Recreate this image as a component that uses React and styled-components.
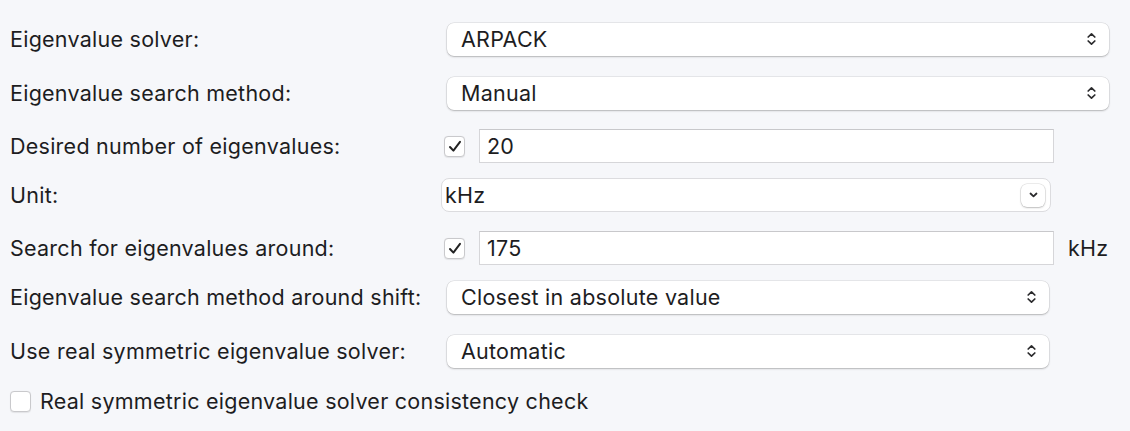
import React from 'react';
import styled, { createGlobalStyle } from 'styled-components';

const GlobalStyle = createGlobalStyle`
  html, body {
    margin: 0;
    padding: 0;
    background: #f6f7fa;
  }
  body {
    font-family: Inter, "Liberation Sans", Arial, sans-serif;
    color: #1d1d1f;
  }
`;

const Panel = styled.div`
  width: 1130px;
  height: 431px;
  box-sizing: border-box;
  padding: 22px 0 0 10px;
  display: flex;
  flex-direction: column;
  background: #f6f7fa;
`;

const Row = styled.div`
  display: grid;
  grid-template-columns: 431px 1fr;
  align-items: center;
  height: 34px;
  margin-top: ${p => p.$gap || 0}px;
`;

const Label = styled.span`
  font-size: 21.5px;
  letter-spacing: 0.25px;
  white-space: nowrap;
`;

const Control = styled.div`
  display: flex;
  align-items: center;
  padding-left: ${p => p.$left || 0}px;
`;

const Value = styled.span`
  font-size: 21.5px;
  letter-spacing: 0.25px;
`;

const PopUp = styled.div`
  width: ${p => p.$width}px;
  height: 33px;
  box-sizing: border-box;
  display: flex;
  align-items: center;
  justify-content: space-between;
  padding: 0 13px 0 14px;
  background: #ffffff;
  border-radius: 7px;
  box-shadow: 0 0 0 0.5px rgba(0, 0, 0, 0.12), 0 1px 2px rgba(0, 0, 0, 0.22);
`;

const Combo = styled.div`
  width: ${p => p.$width}px;
  height: 34px;
  box-sizing: border-box;
  display: flex;
  align-items: center;
  justify-content: space-between;
  padding: 0 5px 0 3px;
  background: #ffffff;
  border: 1px solid #dcdcdf;
  border-radius: 8px;
`;

const ComboButton = styled.div`
  width: 24px;
  height: 23px;
  display: flex;
  align-items: center;
  justify-content: center;
  background: #ffffff;
  border-radius: 6px;
  box-shadow: 0 0 0 0.5px rgba(0, 0, 0, 0.14), 0 1px 2px rgba(0, 0, 0, 0.2);
`;

const Check = styled.div`
  width: 21px;
  height: 21px;
  box-sizing: border-box;
  flex: none;
  display: flex;
  align-items: center;
  justify-content: center;
  background: #ffffff;
  border: 1px solid #c9c9cc;
  border-radius: 4px;
  box-shadow: 0 0.5px 1px rgba(0, 0, 0, 0.08);
`;

const Field = styled.div`
  width: ${p => p.$width}px;
  height: 34px;
  margin-left: 14px;
  box-sizing: border-box;
  display: flex;
  align-items: center;
  padding-left: 7px;
  background: #ffffff;
  border: 1px solid #d6d6d9;
  border-top-color: #c8c8cb;
`;

const Unit = styled(Value)`
  margin-left: 14px;
`;

const CheckRow = styled.label`
  display: flex;
  align-items: center;
  gap: 9px;
  margin-top: ${p => p.$gap}px;
  height: 34px;
`;

const UpDown = () => (
  <svg width="9" height="14" viewBox="0 0 9 14">
    <path d="M1.2 5 L4.5 1.8 L7.8 5 M1.2 9 L4.5 12.2 L7.8 9" fill="none" stroke="#2b2b2d" strokeWidth="1.7" strokeLinecap="round" strokeLinejoin="round" />
  </svg>
);

const Down = () => (
  <svg width="9" height="6" viewBox="0 0 9 6">
    <path d="M1.5 1.5 L4.5 4.3 L7.5 1.5" fill="none" stroke="#2b2b2d" strokeWidth="1.8" strokeLinecap="round" strokeLinejoin="round" />
  </svg>
);

const Tick = () => (
  <svg width="14" height="13" viewBox="0 0 14 13">
    <path d="M2 7 L5.4 10.6 L12 1.8" fill="none" stroke="#222" strokeWidth="2" strokeLinecap="round" strokeLinejoin="round" />
  </svg>
);

const Select = ({ value, width, left }) => (
  <Control $left={left}>
    <PopUp $width={width}>
      <Value>{value}</Value>
      <UpDown />
    </PopUp>
  </Control>
);

const NumberInput = ({ value, unit }) => (
  <Control $left={3}>
    <Check><Tick /></Check>
    <Field $width={575}><Value>{value}</Value></Field>
    {unit && <Unit>{unit}</Unit>}
  </Control>
);

export default function App() {
  return (
    <>
      <GlobalStyle />
      <Panel>
        <Row>
          <Label>Eigenvalue solver:</Label>
          <Select value="ARPACK" width={662} left={6} />
        </Row>
        <Row $gap={20}>
          <Label>Eigenvalue search method:</Label>
          <Select value="Manual" width={662} left={6} />
        </Row>
        <Row $gap={19}>
          <Label>Desired number of eigenvalues:</Label>
          <NumberInput value="20" />
        </Row>
        <Row $gap={15}>
          <Label>Unit:</Label>
          <Control>
            <Combo $width={610}>
              <Value>kHz</Value>
              <ComboButton><Down /></ComboButton>
            </Combo>
          </Control>
        </Row>
        <Row $gap={19}>
          <Label>Search for eigenvalues around:</Label>
          <NumberInput value="175" unit="kHz" />
        </Row>
        <Row $gap={15}>
          <Label>Eigenvalue search method around shift:</Label>
          <Select value="Closest in absolute value" width={602} left={6} />
        </Row>
        <Row $gap={20}>
          <Label>Use real symmetric eigenvalue solver:</Label>
          <Select value="Automatic" width={602} left={6} />
        </Row>
        <CheckRow $gap={16}>
          <Check />
          <Label>Real symmetric eigenvalue solver consistency check</Label>
        </CheckRow>
      </Panel>
    </>
  );
}
